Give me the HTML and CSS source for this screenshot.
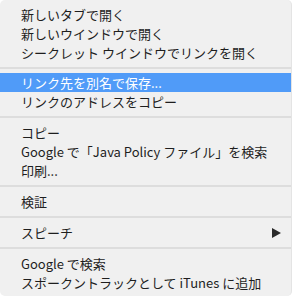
FILE: index.html
```html
<!DOCTYPE html>
<html>
  <head>
    <title>Context Menu</title>
    <link rel="stylesheet" href="styles.css">
  </head>
  <body>
    <div class="menu">
      <div class="item">新しいタブで開く</div>
      <div class="item">新しいウインドウで開く</div>
      <div class="item">シークレット ウインドウでリンクを開く</div>
      <div class="separator tight"></div>
      <div class="item selected">リンク先を別名で保存...</div>
      <div class="item">リンクのアドレスをコピー</div>
      <div class="separator"></div>
      <div class="item">コピー</div>
      <div class="item">Google で「Java Policy ファイル」を検索</div>
      <div class="item">印刷...</div>
      <div class="separator"></div>
      <div class="item">検証</div>
      <div class="separator"></div>
      <div class="item submenu">
        <span>スピーチ</span>
        <svg class="arrow" width="9" height="10" viewBox="0 0 9 10">
          <polygon points="0,0 9,5 0,10" />
        </svg>
      </div>
      <div class="separator"></div>
      <div class="item">Google で検索</div>
      <div class="item">スポークントラックとして iTunes に追加</div>
    </div>
  </body>
</html>
```

FILE: styles.css
```css
body {
  margin: 0;
  background-color: #ffffff;
  font-family: "Noto Sans CJK JP", "Liberation Sans", sans-serif;
}

.menu {
  width: 292px;
  height: 296px;
  box-sizing: border-box;
  padding-top: 5px;
  background-color: #f0f0f0;
  border-radius: 5px;
  border-right: 1px solid #e4e4e4;
}

.item {
  height: 19px;
  line-height: 19px;
  padding-left: 21px;
  padding-right: 10px;
  font-size: 13px;
  color: #1e1e1e;
  white-space: nowrap;
}

.item.selected {
  background-color: #509bf8;
  color: #ffffff;
}

.submenu {
  display: flex;
  justify-content: space-between;
  align-items: center;
}

.arrow {
  fill: #2a2a2a;
}

.separator {
  height: 2px;
  margin: 5px 0;
  background-color: #dddddd;
}

.separator.tight {
  margin-bottom: 4px;
}
```
